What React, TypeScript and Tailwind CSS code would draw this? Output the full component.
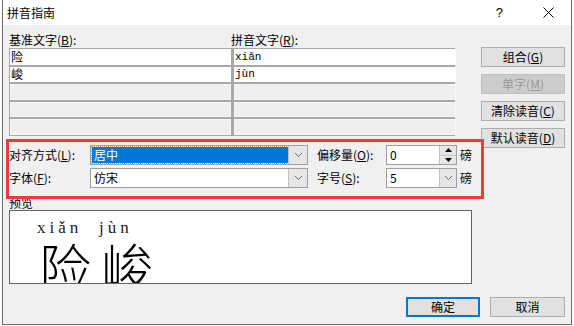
import React from "react";

const ui = { fontFamily: '"Noto Sans CJK SC", "Liberation Sans", sans-serif' };
const mono = { fontFamily: '"Liberation Mono", "Noto Sans CJK SC", monospace' };

function Key({ k }: { k: string }) {
  return (
    <>
      (<span className="underline underline-offset-1">{k}</span>)
    </>
  );
}

function Chevron() {
  return (
    <svg width="9" height="6" viewBox="0 0 9 6">
      <path d="M1 1 L4.5 4.5 L8 1" fill="none" stroke="#6d6d6d" strokeWidth="1" />
    </svg>
  );
}

function Btn({ children, disabled, primary, w }: { children: React.ReactNode; disabled?: boolean; primary?: boolean; w: string }) {
  return (
    <div
      className={`${w} h-[20px] flex items-center justify-center text-[12px] ${
        disabled
          ? "bg-[#cccccc] border border-[#bfbfbf] text-[#9a9a9a]"
          : primary
          ? "bg-[#e1e1e1] border-2 border-[#0078d7] text-black"
          : "bg-[#e1e1e1] border border-[#adadad] text-black"
      }`}
    >
      {children}
    </div>
  );
}

const rows = [
  ["险", "xiǎn", true],
  ["峻", "jùn", true],
  ["", "", false],
  ["", "", false],
  ["", "", false],
] as const;

export default function App() {
  return (
    <div className="w-[574px] h-[326px] bg-white relative overflow-hidden" style={ui}>
      <div className="ml-[2px] w-[570px] h-[325px] border-x border-b border-[#6b6b6b] bg-[#f0f0f0] flex flex-col">
        {/* title bar */}
        <div className="h-[25px] bg-white flex items-center pl-[4px] text-[12px] text-black">
          <span>拼音指南</span>
          <span className="ml-auto mr-[40px] text-[13px]" style={{ fontFamily: '"Liberation Sans", sans-serif' }}>?</span>
          <svg width="11" height="11" viewBox="0 0 11 11" className="mr-[17px]">
            <path d="M0.5 0.5 L10.5 10.5 M10.5 0.5 L0.5 10.5" stroke="#000" strokeWidth="1" />
          </svg>
        </div>

        {/* body */}
        <div className="relative flex-1 pl-[6px] pr-[6px] pt-[6px] text-[12px] text-black">
          <div className="flex items-start h-[105px]">
            <div className="w-[446px]">
              <div className="flex h-[17px] items-center">
                <span className="w-[222px]">基准文字<Key k="B" />:</span>
                <span>拼音文字<Key k="R" />:</span>
              </div>
              <div className="grid grid-cols-[221px_222px] gap-x-[3px] gap-y-[2px] bg-[#a8a8a8] border border-[#a8a8a8]">
                {rows.map(([c, p, filled], i) => (
                  <React.Fragment key={i}>
                    <div className={`h-[15.6px] flex items-center pl-[1px] ${filled ? "bg-white" : "bg-[#efefef] border border-[#f7f7f7]"}`}>{c}</div>
                    <div className={`h-[15.6px] flex items-center pl-[1px] text-[11px] ${filled ? "bg-white" : "bg-[#efefef] border border-[#f7f7f7]"}`} style={mono}>{p}</div>
                  </React.Fragment>
                ))}
              </div>
            </div>
            <div className="ml-[26px] mt-[16px] flex flex-col gap-[7px]">
              <Btn w="w-[84px]">组合<Key k="G" /></Btn>
              <Btn w="w-[84px]" disabled>单字<Key k="M" /></Btn>
              <Btn w="w-[84px]">清除读音<Key k="C" /></Btn>
              <Btn w="w-[84px]">默认读音<Key k="D" /></Btn>
            </div>
          </div>

          {/* alignment / offset row */}
          <div className="mt-[9px] flex items-center h-[20px]">
            <span className="w-[81px]">对齐方式<Key k="L" />:</span>
            <div className="w-[218px] h-[20px] bg-white border border-[#a0a0a0] flex items-center">
              <div className="flex-1 h-[16px] ml-[1px] bg-[#0078d7] outline-dotted outline-1 outline-[#f0a030] text-white flex items-center pl-[2px]">居中</div>
              <div className="w-[19px] h-full bg-[#e6e6e6] border-l border-[#c0c0c0] flex items-center justify-center"><Chevron /></div>
            </div>
            <span className="ml-[9px] w-[69px]">偏移量<Key k="O" />:</span>
            <div className="w-[71px] h-[20px] bg-white border border-[#a0a0a0] flex items-center">
              <span className="flex-1 pl-[3px]">0</span>
              <div className="w-[17px] h-full border-l border-[#c0c0c0] bg-[#e6e6e6] flex flex-col">
                <div className="flex-1 flex items-center justify-center border-b border-[#c8c8c8]">
                  <svg width="7" height="4" viewBox="0 0 7 4"><path d="M0 4 L3.5 0 L7 4 Z" fill="#000" /></svg>
                </div>
                <div className="flex-1 flex items-center justify-center">
                  <svg width="7" height="4" viewBox="0 0 7 4"><path d="M0 0 L3.5 4 L7 0 Z" fill="#000" /></svg>
                </div>
              </div>
            </div>
            <span className="ml-[3px]">磅</span>
          </div>

          {/* font / size row */}
          <div className="mt-[3px] flex items-center h-[20px]">
            <span className="w-[81px]">字体<Key k="F" />:</span>
            <div className="w-[218px] h-[20px] bg-white border border-[#a0a0a0] flex items-center">
              <span className="flex-1 pl-[3px]">仿宋</span>
              <div className="w-[19px] h-full bg-[#e6e6e6] border-l border-[#c0c0c0] flex items-center justify-center"><Chevron /></div>
            </div>
            <span className="ml-[9px] w-[69px]">字号<Key k="S" />:</span>
            <div className="w-[71px] h-[20px] bg-white border border-[#a0a0a0] flex items-center">
              <span className="flex-1 pl-[3px]">5</span>
              <div className="w-[17px] h-full bg-[#e6e6e6] border-l border-[#c0c0c0] flex items-center justify-center"><Chevron /></div>
            </div>
            <span className="ml-[3px]">磅</span>
          </div>

          {/* preview */}
          <div className="mt-[8px] h-[13px] leading-[13px]">预览</div>
          <div className="mt-[1px] w-[463px] h-[74px] bg-white border border-[#646464] overflow-hidden pl-[27px] pt-[8px] flex gap-[6px]">
            {[
              ["xiǎn", "险"],
              ["jùn", "峻"],
            ].map(([p, c]) => (
              <div key={c} className="w-[56px] flex flex-col">
                <div className="text-[17px] leading-[17px] tracking-[4px] text-[#222]" style={{ fontFamily: '"Liberation Serif", serif' }}>{p}</div>
                <div className="mt-[4px] ml-[2px] text-[52px] leading-[52px] font-light" style={{ fontFamily: '"Noto Sans CJK SC", serif' }}>{c}</div>
              </div>
            ))}
          </div>

          {/* bottom buttons */}
          <div className="mt-[13px] flex justify-end gap-[10px]">
            <Btn w="w-[74px]" primary>确定</Btn>
            <Btn w="w-[75px]">取消</Btn>
          </div>
        </div>
      </div>

      {/* red annotation box */}
      <div className="absolute left-[6px] top-[139px] w-[478px] h-[60px] border-[3px] border-[#ef3b3b] pointer-events-none" />
    </div>
  );
}
